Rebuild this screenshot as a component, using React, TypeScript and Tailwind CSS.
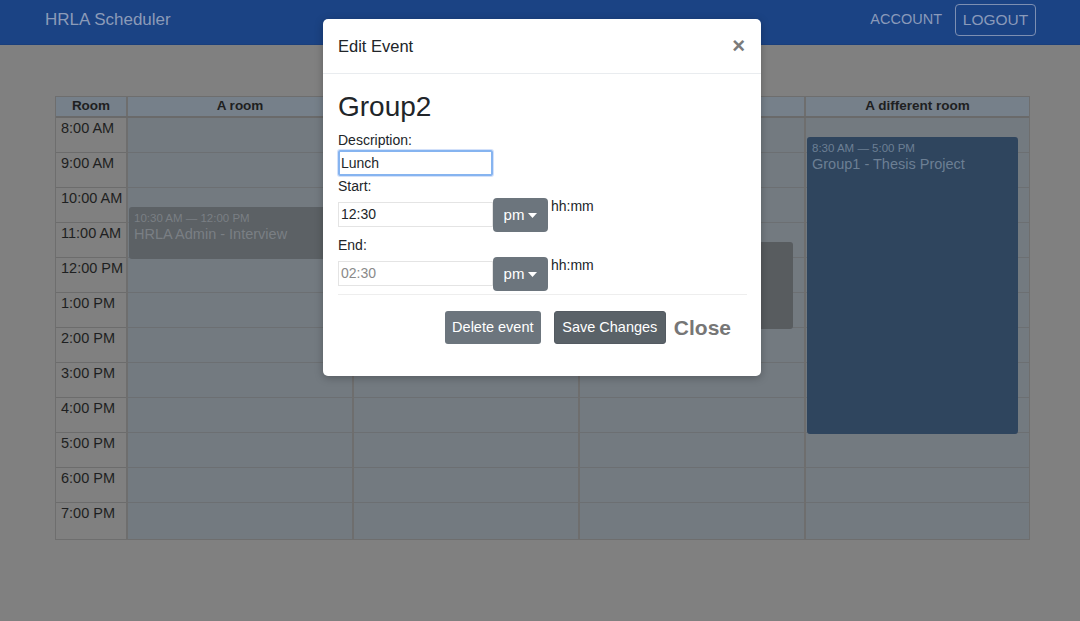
import React from "react";

const times = ["8:00 AM","9:00 AM","10:00 AM","11:00 AM","12:00 PM","1:00 PM","2:00 PM","3:00 PM","4:00 PM","5:00 PM","6:00 PM","7:00 PM"];
const rooms = ["A room", "", "", "A different room"];
const ROW = 35;

type Ev = { col: number; start: number; end: number; time: string; title: string; bg: string; fg: string };
const events: Ev[] = [
  { col: 0, start: 10.5, end: 12, time: "10:30 AM — 12:00 PM", title: "HRLA Admin - Interview", bg: "#5c6165", fg: "#7a7f84" },
  { col: 2, start: 11.5, end: 14, time: "", title: "", bg: "#585c5f", fg: "#7a7f84" },
  { col: 3, start: 8.5, end: 17, time: "8:30 AM — 5:00 PM", title: "Group1 - Thesis Project", bg: "#2f455e", fg: "#6c7f94" },
];

export default function App() {
  return (
    <div className="relative w-[1080px] h-[621px] overflow-hidden bg-[#808080]" style={{ fontFamily: '"Liberation Sans", Arial, sans-serif' }}>
      {/* navbar */}
      <div className="h-[45px] bg-[#1b4384] border-b border-[#1a3f7c] flex items-start justify-between pl-[45px] pr-[44px]">
        <div className="mt-[7px] text-[17px] text-[#8c9bb8]">HRLA Scheduler</div>
        <div className="flex items-start gap-[13px] mt-[4px]">
          <div className="mt-[5px] text-[14.5px] text-[#8a9aba]">ACCOUNT</div>
          <div className="h-[32px] w-[81px] rounded-[4px] border border-[#7d8fb2] flex items-center justify-center text-[15.5px] text-[#8a9aba]">LOGOUT</div>
        </div>
      </div>

      {/* table */}
      <div className="ml-[55px] mt-[51px] w-[975px] border border-[#6e6e6e] bg-[#6e6e6e]">
        <div className="grid grid-cols-[70px_224px_224px_224px_223px] gap-x-[2px] border-b-[2px] border-[#6a6a6a]">
          <div className="h-[19px] bg-[#76808a] text-[13.5px] font-bold text-[#1e1f21] flex items-center justify-center">Room</div>
          {rooms.map((r, i) => (
            <div key={i} className="h-[19px] bg-[#76808a] text-[13.5px] font-bold text-[#1e1f21] flex items-center justify-center">{r}</div>
          ))}
        </div>
        <div className="grid grid-cols-[70px_224px_224px_224px_223px] gap-x-[2px]">
          <div className="flex flex-col bg-[#6c6c6c] gap-y-px">
            {times.map((t, i) => (
              <div key={t} className={`${i === times.length - 1 ? "h-[36px]" : "h-[34px]"} bg-[#808080] pl-[5px] pt-[1px] text-[14.5px] text-[#1e1f21] leading-[18px]`}>{t}</div>
            ))}
          </div>
          {rooms.map((_, ci) => (
            <div key={ci} className="relative flex flex-col bg-[#6c6f72] gap-y-px">
              {times.map((t, i) => (
                <div key={t} className={`${i === times.length - 1 ? "h-[36px]" : "h-[34px]"} bg-[#737a80]`} />
              ))}
              {events.filter((e) => e.col === ci).map((e, k) => (
                <div
                  key={k}
                  className="absolute left-[1px] right-[11px] rounded-[3px] px-[5px] pt-[5px]"
                  style={{ top: (e.start - 8) * ROW + 1, height: (e.end - e.start) * ROW, background: e.bg }}
                >
                  <div className="text-[11.5px] leading-[13px]" style={{ color: e.fg }}>{e.time}</div>
                  <div className="text-[14.5px] leading-[18px]" style={{ color: e.fg }}>{e.title}</div>
                </div>
              ))}
            </div>
          ))}
        </div>
      </div>

      {/* modal */}
      <div className="absolute left-[323px] top-[19px] w-[438px] h-[357px] bg-white rounded-[5px] shadow-[0_2px_8px_rgba(0,0,0,0.25)] text-[#212529]">
        <div className="h-[55px] border-b border-[#e9ecef] flex items-center justify-between px-[15px]">
          <div className="text-[16.5px]">Edit Event</div>
          <div className="text-[22px] font-bold text-[#7a7a7a] leading-none mr-[1px]">×</div>
        </div>
        <div className="px-[15px] pt-[16px]">
          <div className="text-[28px] leading-[34px]">Group2</div>
          <div className="mt-[8px] text-[14px] leading-[17px]">Description:</div>
          <div className="mt-[1px] w-[155px] h-[26px] border-[2px] border-[#86b4f0] rounded-[2px] shadow-[0_0_0_1px_rgba(130,170,240,0.35)] flex items-center pl-[1px] text-[14px]">Lunch</div>
          <div className="mt-[2px] text-[14px] leading-[17px]">Start:</div>
          <div className="flex items-start">
            <div className="mt-[7px] w-[155px] h-[25px] border border-[#e4e4e4] flex items-center pl-[2px] text-[14px]">12:30</div>
            <div className="mt-[3px] w-[55px] h-[34px] rounded-[4px] bg-[#6c757d] text-white flex items-center justify-center gap-[4px] text-[15px]">
              pm
              <svg width="9" height="5" viewBox="0 0 9 5"><path d="M0 0h9L4.5 5z" fill="white" /></svg>
            </div>
            <div className="ml-[3px] text-[14px] leading-[17px] mt-[3px]">hh:mm</div>
          </div>
          <div className="mt-[5px] text-[14px] leading-[17px]">End:</div>
          <div className="flex items-start">
            <div className="mt-[7px] w-[155px] h-[25px] border border-[#e4e4e4] flex items-center pl-[2px] text-[14px] text-[#8a8a8a]">02:30</div>
            <div className="mt-[3px] w-[55px] h-[34px] rounded-[4px] bg-[#6c757d] text-white flex items-center justify-center gap-[4px] text-[15px]">
              pm
              <svg width="9" height="5" viewBox="0 0 9 5"><path d="M0 0h9L4.5 5z" fill="white" /></svg>
            </div>
            <div className="ml-[3px] text-[14px] leading-[17px] mt-[3px]">hh:mm</div>
          </div>
          <div className="mt-[3px] mr-[-1px] border-t border-[#eeeeee]" />
          <div className="mt-[16px] flex items-center justify-end pr-[15px]">
            <div className="w-[96px] h-[33px] rounded-[3px] bg-[#6c757d] text-white text-[14.5px] flex items-center justify-center">Delete event</div>
            <div className="ml-[13px] w-[112px] h-[33px] rounded-[3px] bg-[#5a6268] border border-[#545b62] text-white text-[14.5px] flex items-center justify-center">Save Changes</div>
            <div className="ml-[8px] text-[21px] font-bold text-[#767676]">Close</div>
          </div>
        </div>
      </div>
    </div>
  );
}
